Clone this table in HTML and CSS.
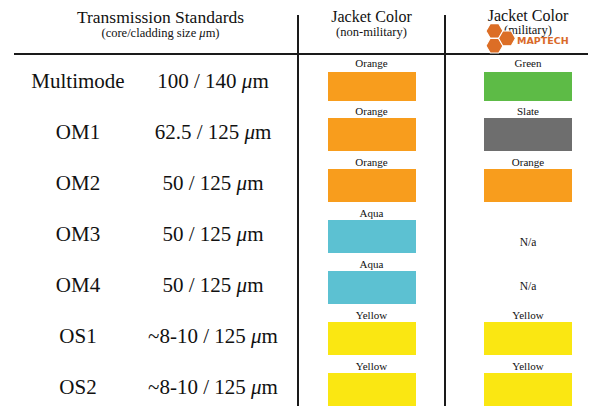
FILE: index.html
```html
<!DOCTYPE html>
<html>
<head>
<meta charset="utf-8">
<link rel="stylesheet" href="styles.css">
</head>
<body>
<div class="chart">
  <div class="hcell hstd">
    <div class="htitle">Transmission Standards</div>
    <div class="hsub">(core/cladding size <i>μ</i>m)</div>
  </div>
  <div class="hcell hjack">
    <div class="jtitle">Jacket Color</div>
    <div class="jsub">(non-military)</div>
  </div>
  <div class="hcell hjack hmil">
    <div class="jtitle">Jacket Color</div>
    <div class="jsub">(military)</div>
  </div>

  <div class="std"><span>Multimode</span><span>100 / 140 <i>μ</i>m</span></div>
  <div class="jc r1"><div class="lbl">Orange</div><div class="sw orange"></div></div>
  <div class="jc mil r1"><div class="lbl">Green</div><div class="sw green"></div></div>

  <div class="std"><span>OM1</span><span>62.5 / 125 <i>μ</i>m</span></div>
  <div class="jc"><div class="lbl">Orange</div><div class="sw orange"></div></div>
  <div class="jc mil"><div class="lbl">Slate</div><div class="sw slate"></div></div>

  <div class="std"><span>OM2</span><span>50 / 125 <i>μ</i>m</span></div>
  <div class="jc"><div class="lbl">Orange</div><div class="sw orange"></div></div>
  <div class="jc mil"><div class="lbl">Orange</div><div class="sw orange"></div></div>

  <div class="std"><span>OM3</span><span>50 / 125 <i>μ</i>m</span></div>
  <div class="jc"><div class="lbl">Aqua</div><div class="sw aqua"></div></div>
  <div class="jc mil"><div class="na na-a">N/a</div></div>

  <div class="std"><span>OM4</span><span>50 / 125 <i>μ</i>m</span></div>
  <div class="jc"><div class="lbl">Aqua</div><div class="sw aqua"></div></div>
  <div class="jc mil"><div class="na na-b">N/a</div></div>

  <div class="std"><span>OS1</span><span>~8-10 / 125 <i>μ</i>m</span></div>
  <div class="jc"><div class="lbl">Yellow</div><div class="sw yellow"></div></div>
  <div class="jc mil"><div class="lbl">Yellow</div><div class="sw yellow"></div></div>

  <div class="std"><span>OS2</span><span>~8-10 / 125 <i>μ</i>m</span></div>
  <div class="jc"><div class="lbl">Yellow</div><div class="sw yellow"></div></div>
  <div class="jc mil"><div class="lbl">Yellow</div><div class="sw yellow"></div></div>

  <div class="logo">
    <svg width="33" height="31" viewBox="0 0 33 31">
      <g fill="#DC6E26" stroke="#ffffff" stroke-width="1.1" stroke-linejoin="round">
        <polygon points="19,8 14.75,15.36 6.25,15.36 2,8 6.25,0.64 14.75,0.64"/>
        <polygon points="19,22.7 14.75,30.06 6.25,30.06 2,22.7 6.25,15.34 14.75,15.34"/>
        <polygon points="31.5,15.35 27.25,22.71 18.75,22.71 14.5,15.35 18.75,7.99 27.25,7.99"/>
      </g>
    </svg>
    <span class="brand">MAPTECH</span>
  </div>
</div>
</body>
</html>
```
FILE: styles.css
```css
html, body {
  margin: 0;
  padding: 0;
  background: #ffffff;
}

body {
  font-family: "Liberation Serif", Tinos, "DejaVu Serif", serif;
  color: #111111;
}

.chart {
  position: relative;
  display: grid;
  grid-template-columns: 283px 147px 144px;
  grid-template-rows: 47px 51px 51px 51px 51px 51px 51px 45px;
  margin: 8px 0 0 14px;
  width: 574px;
  font-family: "Liberation Serif", Tinos, "DejaVu Serif", serif;
}

.hcell {
  border-bottom: 2px solid #1a1a1a;
  text-align: center;
}

.hstd {
  padding-left: 10px;
}

.htitle {
  font-size: 17.5px;
  line-height: 18px;
}

.hsub {
  font-size: 12.5px;
  line-height: 15px;
}

.hjack {
  padding-left: 2px;
  background-image: linear-gradient(#1a1a1a, #1a1a1a);
  background-repeat: no-repeat;
  background-position: 0 7px;
  background-size: 2px 100%;
}

.jtitle {
  font-size: 16px;
  line-height: 18px;
}

.jsub {
  font-size: 12.5px;
  line-height: 12.5px;
}

.hmil {
  padding-left: 24px;
}

.hmil .jtitle {
  line-height: 16px;
}

.hmil .jsub {
  line-height: 13px;
}

.std {
  display: grid;
  grid-template-columns: 128px 142px;
  padding-top: 16px;
  font-size: 21px;
  line-height: 21px;
  text-align: center;
  white-space: nowrap;
}

.jc {
  border-left: 2px solid #1a1a1a;
  display: flex;
  flex-direction: column;
  align-items: center;
}

.jc.mil {
  padding-left: 22px;
}

.lbl {
  font-size: 11px;
  line-height: 10px;
  margin-bottom: 2px;
}

.sw {
  width: 88px;
  height: 33px;
}

.r1 {
  padding-top: 3px;
}

.r1 .lbl {
  margin-bottom: 4px;
}

.r1 .sw {
  height: 29px;
}

.na {
  font-size: 11.5px;
  line-height: 12px;
}

.na-a {
  padding-top: 28px;
}

.na-b {
  padding-top: 21px;
}

.orange { background: #F89D1D; }
.green { background: #5DBB46; }
.slate { background: #6E6E6E; }
.aqua { background: #5CC1D2; }
.yellow { background: #FAE712; }

.logo {
  position: absolute;
  left: 470px;
  top: 15px;
  display: flex;
  align-items: flex-start;
}

.logo svg {
  display: block;
}

.brand {
  margin-top: 13px;
  font-family: "DejaVu Sans", sans-serif;
  font-weight: bold;
  font-size: 9.5px;
  line-height: 10px;
  color: #D96A2A;
}
```
